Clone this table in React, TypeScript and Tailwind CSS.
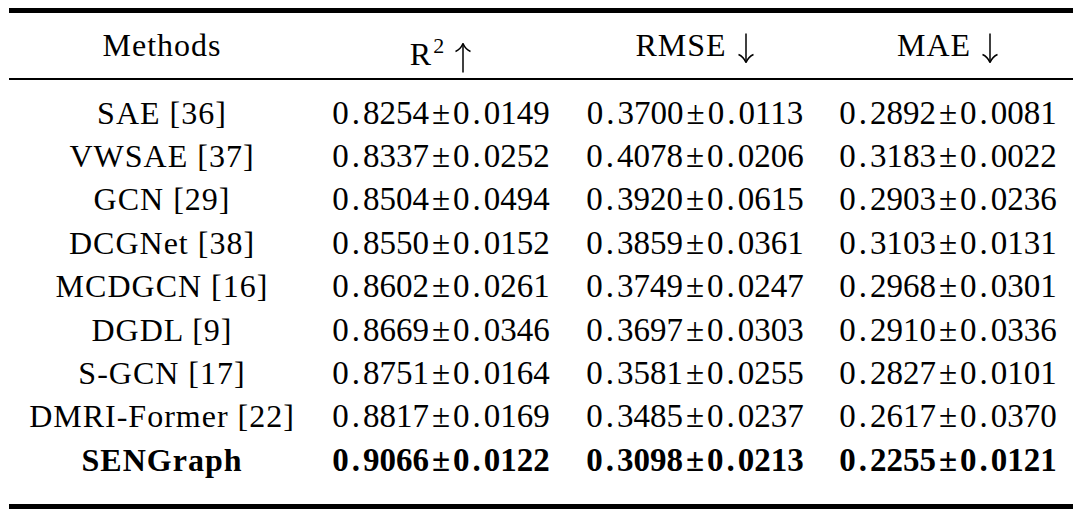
import React from "react";

const rows: { name: string; r2: [string, string]; rmse: [string, string]; mae: [string, string]; bold?: boolean }[] = [
  { name: "SAE [36]", r2: ["0.8254", "0.0149"], rmse: ["0.3700", "0.0113"], mae: ["0.2892", "0.0081"] },
  { name: "VWSAE [37]", r2: ["0.8337", "0.0252"], rmse: ["0.4078", "0.0206"], mae: ["0.3183", "0.0022"] },
  { name: "GCN [29]", r2: ["0.8504", "0.0494"], rmse: ["0.3920", "0.0615"], mae: ["0.2903", "0.0236"] },
  { name: "DCGNet [38]", r2: ["0.8550", "0.0152"], rmse: ["0.3859", "0.0361"], mae: ["0.3103", "0.0131"] },
  { name: "MCDGCN [16]", r2: ["0.8602", "0.0261"], rmse: ["0.3749", "0.0247"], mae: ["0.2968", "0.0301"] },
  { name: "DGDL [9]", r2: ["0.8669", "0.0346"], rmse: ["0.3697", "0.0303"], mae: ["0.2910", "0.0336"] },
  { name: "S-GCN [17]", r2: ["0.8751", "0.0164"], rmse: ["0.3581", "0.0255"], mae: ["0.2827", "0.0101"] },
  { name: "DMRI-Former [22]", r2: ["0.8817", "0.0169"], rmse: ["0.3485", "0.0237"], mae: ["0.2617", "0.0370"] },
  { name: "SENGraph", r2: ["0.9066", "0.0122"], rmse: ["0.3098", "0.0213"], mae: ["0.2255", "0.0121"], bold: true },
];

function Dec({ v }: { v: string }) {
  const [i, f] = v.split(".");
  return (
    <>
      {i}
      <span className="mx-[3px]">.</span>
      {f}
    </>
  );
}

function Num({ p }: { p: [string, string] }) {
  return (
    <span className="text-[33px] leading-none">
      <Dec v={p[0]} />
      <span className="mx-[3px]">±</span>
      <Dec v={p[1]} />
    </span>
  );
}

function Arrow({ up }: { up: boolean }) {
  return (
    <svg
      width="18"
      height="31"
      viewBox="0 0 18 31"
      className="inline-block align-[-8px] ml-[10px]"
      fill="none"
      stroke="black"
      strokeWidth="1.5"
    >
      {up ? (
        <>
          <path d="M9 1.5 V30.5" />
          <path d="M9 1.5 C7.5 5 5 8 1.5 9.5" />
          <path d="M9 1.5 C10.5 5 13 8 16.5 9.5" />
        </>
      ) : (
        <>
          <path d="M9 0.5 V29.5" />
          <path d="M9 29.5 C7.5 26 5 23 1.5 21.5" />
          <path d="M9 29.5 C10.5 26 13 23 16.5 21.5" />
        </>
      )}
    </svg>
  );
}

const grid = "grid grid-cols-[306px_252px_256px_250px] h-[43.4px] leading-[43.4px] text-center whitespace-nowrap";

export default function App() {
  return (
    <div
      className="w-[1080px] h-[515px] bg-white pt-[8px] pl-[9px] text-black text-[32px]"
      style={{ fontFamily: '"Liberation Serif", "Times New Roman", serif' }}
    >
      <div className="w-[1064px]">
        <div className="h-[5px] bg-black" />
        <div className={`${grid} mt-[11px]`}>
          <div className="tracking-[1px]">Methods</div>
          <div>
            R<span className="text-[22px] align-[12px] ml-[2px]">2</span>
            <Arrow up />
          </div>
          <div className="tracking-[1px]">
            RMSE
            <Arrow up={false} />
          </div>
          <div className="tracking-[1px]">
            MAE
            <Arrow up={false} />
          </div>
        </div>
        <div className="h-[2px] bg-black mt-[10.3px]" />
        <div className="mt-[12px]">
          {rows.map((r) => (
            <div key={r.name} className={`${grid} ${r.bold ? "font-bold" : ""}`}>
              <div className="tracking-[1px]">{r.name}</div>
              <div>
                <Num p={r.r2} />
              </div>
              <div>
                <Num p={r.rmse} />
              </div>
              <div>
                <Num p={r.mae} />
              </div>
            </div>
          ))}
        </div>
        <div className="h-[5px] bg-black mt-[21.4px]" />
      </div>
    </div>
  );
}
